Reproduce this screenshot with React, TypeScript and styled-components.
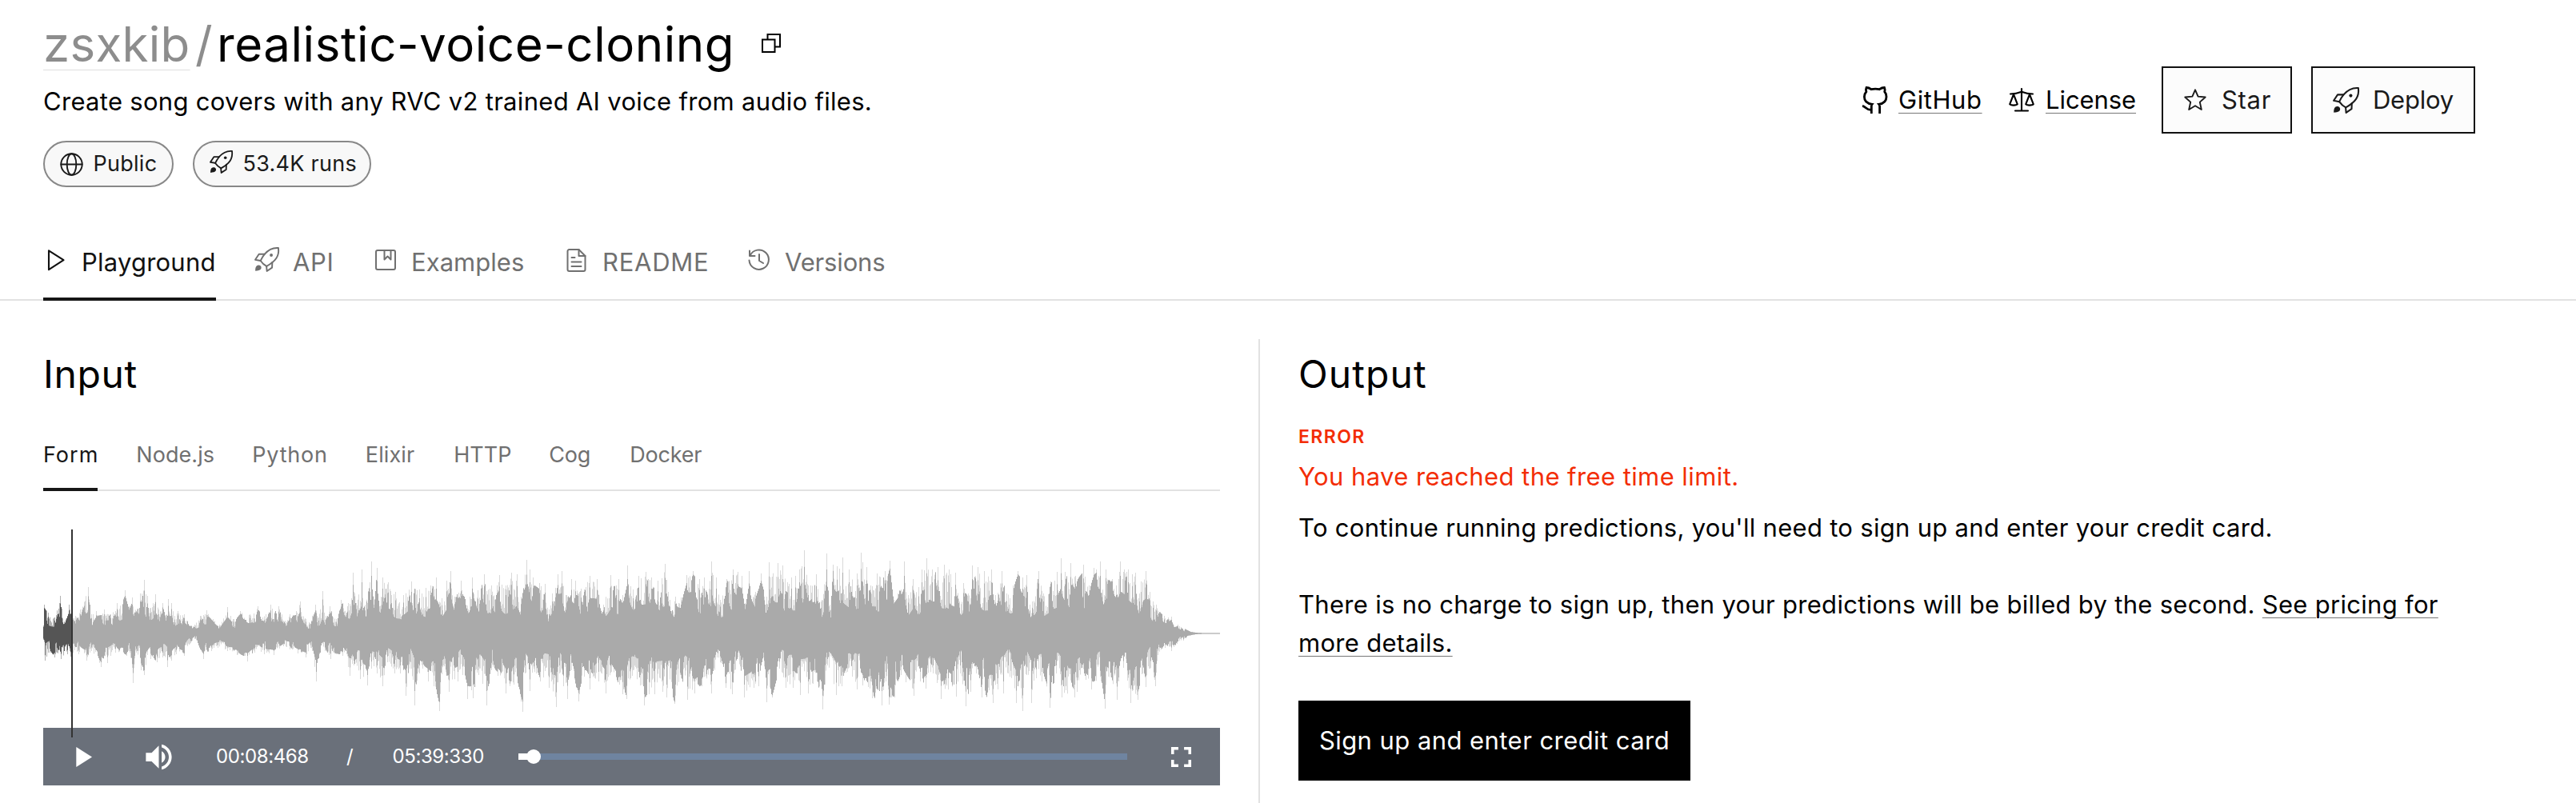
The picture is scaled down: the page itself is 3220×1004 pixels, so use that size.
import React from "react";
import styled, { createGlobalStyle } from "styled-components";

const GlobalStyle = createGlobalStyle`
  * { box-sizing: border-box; }
  body {
    margin: 0;
    background: #fff;
    color: #000;
    font-family: "Inter", "Liberation Sans", sans-serif;
    font-size: 31px;
    line-height: 48px;
    letter-spacing: 0.3px;
  }
`;

const Page = styled.div`
  width: 3220px;
  height: 1004px;
  overflow: hidden;
  display: flex;
  flex-direction: column;
`;

/* ---------- header ---------- */

const Header = styled.header`
  flex: none;
  display: flex;
  justify-content: space-between;
  padding: 19px 126px 0 54px;
  height: 304px;
`;

const TitleRow = styled.h1`
  margin: 0;
  display: flex;
  align-items: center;
  height: 72px;
  font-size: 60px;
  font-weight: 400;
  line-height: 72px;
`;

const Owner = styled.a`
  width: 183px;
  color: #8d8d8d;
  letter-spacing: 0.3px;
  white-space: nowrap;
  text-decoration: underline 1px #dedede;
  text-underline-offset: 10px;
  text-decoration-skip-ink: none;
`;

const Slash = styled.span`
  width: 34px;
  padding-left: 7px;
  color: #8d8d8d;
`;

const ModelName = styled.span`
  letter-spacing: 0.55px;
  margin-right: 33px;
`;

const Description = styled.p`
  margin: 12px 0 25px;
`;

const Pills = styled.div`
  display: flex;
  gap: 24px;
`;

const Pill = styled.span<{ $width: number }>`
  display: flex;
  align-items: center;
  width: ${(p) => p.$width}px;
  height: 58px;
  padding-left: 19px;
  border: 2px solid #888;
  border-radius: 29px;
  background: #f8f8f8;
  color: #1a1a1a;
  font-size: 27px;
  letter-spacing: 0.27px;
  white-space: nowrap;
`;

const PillLabel = styled.span`
  margin-left: 12.5px;
`;

const Actions = styled.div`
  display: flex;
  align-items: center;
  height: 84px;
  margin-top: 64px;
`;

const ActionLink = styled.a<{ $gap: number; $spacing: number; $width: number }>`
  display: flex;
  align-items: center;
  width: ${(p) => p.$width}px;
  gap: ${(p) => p.$gap}px;
  letter-spacing: ${(p) => p.$spacing}px;
`;

const Underlined = styled.span`
  text-decoration: underline 1px #777;
  text-underline-offset: 5px;
`;

const ActionButton = styled.button<{ $width: number; $gap: number; $spacing: number; $left: number }>`
  display: flex;
  align-items: center;
  gap: ${(p) => p.$gap}px;
  width: ${(p) => p.$width}px;
  height: 84px;
  margin: 0 0 0 24px;
  padding: 0 0 0 ${(p) => p.$left}px;
  border: 2px solid #111;
  background: #fcfcfc;
  color: #1a1a1a;
  font: inherit;
  letter-spacing: ${(p) => p.$spacing}px;
`;

/* ---------- tabs ---------- */

const MainTabs = styled.nav`
  flex: none;
  display: flex;
  gap: 48px;
  height: 72px;
  padding-left: 54px;
  box-shadow: inset 0 -2px #e2e2e2;
`;

const MainTab = styled.a<{ $active?: boolean; $width: number; $spacing: number }>`
  display: flex;
  gap: 16px;
  width: ${(p) => p.$width}px;
  height: 72px;
  color: ${(p) => (p.$active ? "#111" : "#707070")};
  letter-spacing: ${(p) => p.$spacing}px;
  white-space: nowrap;
  border-bottom: ${(p) => (p.$active ? "4px solid #161616" : "none")};
`;

const TabIcon = styled.span`
  display: flex;
  flex: none;
  width: 32px;
  height: 32px;
  margin-top: 5px;
`;

const SubTabs = styled.nav`
  display: flex;
  gap: 48px;
  height: 65px;
  margin-top: 51px;
  box-shadow: inset 0 -2px #e2e2e2;
  font-size: 27px;
  line-height: 40px;
`;

const SubTab = styled.a<{ $active?: boolean; $width: number; $spacing: number }>`
  width: ${(p) => p.$width}px;
  height: 65px;
  color: ${(p) => (p.$active ? "#161616" : "#707070")};
  letter-spacing: ${(p) => p.$spacing}px;
  white-space: nowrap;
  border-bottom: ${(p) => (p.$active ? "4px solid #161616" : "none")};
`;

/* ---------- columns ---------- */

const Columns = styled.main`
  flex: none;
  display: flex;
  padding: 48px 126px 0 54px;
  height: 628px;
`;

const InputColumn = styled.section`
  width: 1519px;
  padding: 14px 48px 0 0;
`;

const OutputColumn = styled.section`
  flex: 1;
  padding: 14px 0 0 48px;
  border-left: 2px solid #e2e2e2;
`;

const Heading = styled.h2<{ $spacing: number }>`
  margin: 0;
  font-size: 48px;
  font-weight: 400;
  line-height: 60px;
  letter-spacing: ${(p) => p.$spacing}px;
`;

const ErrorLabel = styled.p`
  margin: 32px 0 0;
  color: #f32d05;
  font-size: 23px;
  font-weight: 600;
  line-height: 32px;
  letter-spacing: 1.4px;
`;

const ErrorMessage = styled.p`
  margin: 10px 0 16px;
  color: #f32d05;
  letter-spacing: 0.42px;
`;

const Paragraph = styled.p`
  margin: 0 0 48px;
  max-width: 1440px;
`;

const SignUp = styled.button`
  display: block;
  width: 490px;
  height: 100px;
  padding: 0;
  border: 0;
  background: #000;
  color: #fff;
  font: inherit;
  letter-spacing: 0.44px;
`;

/* ---------- player ---------- */

const Player = styled.div`
  position: relative;
  width: 1471px;
  margin-top: 48px;
`;

const Wave = styled.svg`
  display: block;
  width: 1471px;
  height: 248px;
`;

const Cursor = styled.i`
  position: absolute;
  top: 0;
  left: 35px;
  width: 2px;
  height: 260px;
  background: #333;
`;

const Controls = styled.div`
  display: flex;
  align-items: center;
  height: 72px;
  padding: 0 27px;
  background: #6a707a;
  color: #fff;
  font-size: 24px;
`;

const Glyph = styled.svg<{ $left?: number }>`
  flex: none;
  width: 43px;
  height: 43px;
  margin-left: ${(p) => p.$left ?? 0}px;
  fill: currentColor;
`;

const Time = styled.span<{ $width: number; $left?: number }>`
  flex: none;
  width: ${(p) => p.$width}px;
  margin-left: ${(p) => p.$left ?? 0}px;
  letter-spacing: -0.4px;
  white-space: nowrap;
`;

const Track = styled.div`
  flex: none;
  display: flex;
  align-items: center;
  width: 761px;
  height: 8px;
  margin-right: 46px;
  background: #6f84a0;
`;

const Progress = styled.i`
  width: 12px;
  height: 8px;
  background: #fff;
`;

const Thumb = styled.i`
  width: 18px;
  height: 18px;
  margin-left: -2px;
  border-radius: 50%;
  background: #fff;
`;

/* ---------- icons ---------- */

const Line = styled.svg<{ $shift?: number }>`
  flex: none;
  display: block;
  margin-top: ${(p) => p.$shift ?? 0}px;
  overflow: visible;
  fill: none;
  stroke: currentColor;
  stroke-linecap: round;
  stroke-linejoin: round;
`;

const SharpLine = styled(Line)`
  stroke-linecap: butt;
  stroke-linejoin: miter;
`;

const Rocket = ({ size, shift = 0 }: { size: number; shift?: number }) => (
  <Line $shift={shift} width={size} height={size} viewBox="0 0 24 24" strokeWidth={1.5}>
    <path d="M23.2.8C16.4.2 12.6 3.6 9.8 6.8 8.2 8.8 6.8 11.2 5.9 13.2c1.6 2.3 3.4 4 5.9 5.3C20.8 13.4 24.2 8.6 23.2.8Z" />
    <path d="M9.9 6.8H4.4L.8 12.2l5.1 1M17.3 14.6l-.2 5.2-5 3.4-.4-4.7" />
    <path d="M.9 23.1C.8 19.6 1.8 17.6 4 17.5c2 0 3.2 1.7 2.5 3.4C5.7 22.6 3.4 22.7.9 23.1Z" fill="currentColor" stroke="none" />
    <circle cx="16.3" cy="7.7" r="1.5" fill="currentColor" stroke="none" />
  </Line>
);

const Copy = () => (
  <SharpLine $shift={-3} width={26} height={26} viewBox="0 0 26 26" strokeWidth={2}>
    <path d="M2 8.5h15.500v15.500H2Z" />
    <path d="M8.500 8.500V2H24v15.500h-6.500" />
  </SharpLine>
);

const Globe = () => (
  <Line width={29} height={29} viewBox="0 0 29 29" strokeWidth={1.9}>
    <circle cx="14.5" cy="14.5" r="13.2" />
    <ellipse cx="14.5" cy="14.5" rx="5.8" ry="13.2" />
    <path d="M1.3 14.5h26.4" />
  </Line>
);

const GitHub = () => (
  <SharpLine width={32} height={35} viewBox="0 0 32 35" strokeWidth={2.8}>
    <path d="M12.3 34v-9.500c0-1 .3-1.600.8-2.200C7.500 21.600 3.400 18.500 3.400 13c0-2.600.9-4.700 2.400-6.300C5.300 5 5.300 3 6 1.500c2.300 0 4.200.9 6 2.200 3-.7 7.400-.7 10.300 0 1.800-1.300 3.900-2.200 6.200-2.200.7 1.500.8 3.500.3 5.200C30.300 8.300 31 10.400 31 13c0 5.500-3.800 8.600-9.400 9.300.6.7 1 1.600 1 2.700v9" />
    <path d="M12.300 29.300C5.500 29.800 5.800 25.500 1 24.300" />
  </SharpLine>
);

const Scales = () => (
  <Line width={32} height={30} viewBox="0 0 32 30" strokeWidth={2.1}>
    <path d="M16 1v27.500M8 28.500h16M2 7.500c5-.1 9-.9 14-2.800 5 1.900 9 2.700 14 2.800" />
    <path d="M6 8 1.200 20.300C2.300 22 9.700 22 10.800 20.300L6 8ZM26 8l-4.800 12.300c1.100 1.700 8.500 1.700 9.600 0L26 8Z" />
  </Line>
);

const Star = () => (
  <Line width={28} height={28} viewBox="0 0 28 28" strokeWidth={1.9}>
    <path d="M14 1.300 17.600 9.600l9.100.9-6.900 6.100 2 9.400L14 21.200 6.200 26l2-9.400-6.900-6.100 9.100-.9Z" />
  </Line>
);

const PlayOutline = () => (
  <Line width={32} height={32} viewBox="0 0 32 32" strokeWidth={2.1}>
    <path d="M7 4.300 25.500 16.200 7 28.200Z" />
  </Line>
);

const Bookmark = () => (
  <Line width={32} height={32} viewBox="0 0 32 32" strokeWidth={2}>
    <rect x="4" y="4" width="24" height="24" rx="2" />
    <path d="M14.500 4v11.500l4-4 4 4V4" />
  </Line>
);

const Document = () => (
  <Line width={32} height={32} viewBox="0 0 32 32" strokeWidth={2}>
    <path d="M18.500 3H6.500a2 2 0 0 0-2 2v23a2 2 0 0 0 2 2h18a2 2 0 0 0 2-2V11Z" />
    <path d="M18.500 3v8h8M9.500 13h4M9.500 18.500h12M9.500 24h12" />
  </Line>
);

const History = () => (
  <Line width={32} height={32} viewBox="0 0 32 32" strokeWidth={2}>
    <path d="M4 4.500V11h6.500M4.600 10.500A12.200 12.200 0 1 1 3.500 16.500M16 9v8l5 3" />
  </Line>
);

/* ---------- waveform ---------- */

// alternating x and peak height above the axis
const upper: number[] = [
  0, 10, 1, 36, 6, 26, 14, 20, 21, 47, 26, 15, 32, 36, 36, 22, 46, 30, 56, 58, 60, 24, 66, 28, 76, 30, 84, 24, 92, 38,
  102, 54, 107, 34, 111, 45, 117, 30, 121, 50, 126, 67, 130, 47, 134, 32, 140, 49, 144, 30, 149, 38, 153, 20, 156, 43,
  160, 38, 164, 22, 168, 28, 176, 24, 187, 9, 196, 22, 204, 29, 212, 18, 220, 11, 230, 33, 238, 18, 246, 28, 258, 24,
  268, 34, 274, 20, 284, 36, 294, 34, 302, 16, 308, 24, 321, 40, 328, 18, 332, 14, 340, 36, 344, 20, 349, 53, 353, 22,
  358, 34, 366, 18, 372, 42, 380, 34, 387, 76, 391, 38, 398, 80, 402, 36, 410, 90, 413, 36, 417, 82, 420, 34, 424, 70,
  431, 64, 440, 52, 450, 48, 460, 65, 470, 55, 478, 57, 484, 60, 491, 70, 498, 44, 504, 66, 509, 78, 514, 46, 522, 66,
  530, 35, 536, 70, 543, 54, 551, 74, 560, 60, 570, 73, 578, 60, 585, 76, 592, 74, 597, 46, 604, 92, 608, 80, 612, 70,
  620, 63, 627, 62, 632, 30, 636, 50, 643, 74, 648, 78, 654, 48, 660, 68, 665, 66, 672, 56, 683, 72, 692, 68, 700, 36,
  709, 73, 716, 60, 719, 68, 724, 48, 730, 85, 737, 55, 744, 72, 753, 77, 760, 70, 768, 66, 777, 87, 783, 42, 790, 46,
  797, 45, 804, 73, 812, 78, 820, 68, 826, 70, 830, 50, 835, 90, 841, 70, 846, 42, 854, 68, 862, 80, 868, 77, 873, 72,
  877, 38, 882, 78, 890, 52, 897, 75, 904, 46, 907, 89, 918, 88, 924, 85, 930, 64, 935, 70, 940, 72, 945, 80, 951, 104,
  956, 60, 966, 74, 972, 40, 979, 100, 983, 36, 987, 86, 992, 84, 999, 95, 1007, 80, 1017, 75, 1022, 101, 1029, 83,
  1034, 60, 1042, 75, 1052, 78, 1058, 91, 1063, 42, 1068, 50, 1076, 90, 1081, 48, 1087, 68, 1094, 58, 1098, 80,
  1104, 94, 1111, 80, 1118, 83, 1126, 86, 1132, 80, 1140, 76, 1145, 40, 1150, 63, 1156, 50, 1161, 85, 1168, 83, 1176, 78,
  1185, 80, 1190, 48, 1198, 78, 1204, 50, 1212, 60, 1218, 78, 1224, 70, 1229, 73, 1233, 36, 1236, 40, 1244, 78, 1250, 50,
  1259, 65, 1267, 77, 1272, 94, 1277, 77, 1284, 88, 1290, 72, 1300, 86, 1307, 60, 1313, 82, 1321, 90, 1326, 48, 1328, 80,
  1336, 68, 1341, 60, 1346, 90, 1356, 80, 1361, 74, 1365, 76, 1370, 50, 1372, 65, 1378, 78, 1383, 52, 1387, 40, 1391, 36,
  1396, 27, 1401, 22, 1406, 20, 1410, 21, 1413, 10, 1418, 11, 1422, 8, 1428, 5, 1434, 2, 1440, 1, 1450, 0.5, 1471, 0.5,
];

// alternating x and peak depth below the axis
const lower: number[] = [
  0, 8, 2, 34, 8, 24, 14, 30, 22, 32, 30, 26, 34, 29, 44, 26, 54, 34, 60, 22, 72, 42, 80, 37, 90, 24, 104, 28, 108, 24,
  112, 62, 116, 24, 122, 46, 126, 52, 134, 32, 142, 36, 149, 30, 155, 42, 160, 34, 166, 26, 176, 28, 184, 12, 190, 7,
  200, 32, 210, 22, 218, 18, 230, 22, 242, 27, 255, 35, 264, 24, 276, 26, 288, 27, 300, 16, 308, 20, 318, 25, 328, 30,
  334, 18, 341, 60, 345, 26, 352, 22, 359, 32, 366, 26, 374, 28, 383, 53, 388, 40, 396, 57, 405, 65, 410, 44, 417, 50,
  424, 66, 430, 36, 439, 50, 446, 50, 453, 78, 458, 44, 464, 90, 470, 50, 481, 60, 488, 66, 495, 97, 500, 40, 507, 73,
  518, 60, 524, 52, 530, 82, 537, 81, 544, 52, 554, 90, 560, 46, 568, 53, 578, 75, 588, 64, 599, 98, 602, 50, 608, 72,
  616, 50, 621, 60, 632, 68, 641, 92, 645, 50, 650, 66, 655, 82, 660, 46, 669, 85, 676, 54, 683, 70, 694, 60, 703, 75,
  710, 48, 724, 76, 729, 82, 734, 56, 746, 65, 751, 90, 757, 76, 764, 76, 774, 73, 779, 80, 789, 88, 797, 56, 805, 83,
  814, 75, 823, 66, 835, 75, 842, 30, 846, 36, 853, 68, 861, 76, 868, 30, 876, 80, 888, 68, 894, 66, 900, 30, 904, 86,
  911, 80, 920, 44, 928, 68, 937, 68, 946, 77, 956, 75, 967, 60, 974, 95, 980, 40, 991, 77, 998, 66, 1005, 48, 1017, 70,
  1024, 65, 1036, 81, 1048, 90, 1053, 60, 1057, 89, 1064, 80, 1072, 52, 1078, 61, 1088, 78, 1096, 60, 1103, 69, 1112, 50,
  1122, 82, 1131, 70, 1141, 79, 1146, 50, 1153, 91, 1159, 73, 1166, 50, 1173, 80, 1187, 87, 1193, 70, 1200, 75, 1206, 50,
  1216, 87, 1224, 97, 1229, 52, 1235, 87, 1241, 56, 1248, 60, 1258, 93, 1266, 50, 1273, 80, 1289, 80, 1292, 73, 1303, 58,
  1310, 70, 1322, 60, 1327, 94, 1331, 54, 1342, 83, 1350, 43, 1359, 87, 1368, 83, 1374, 50, 1378, 67, 1384, 43, 1390, 66,
  1393, 27, 1402, 18, 1410, 22, 1417, 13, 1425, 9, 1430, 3, 1440, 1, 1450, 0.5, 1471, 0.5,
];

const SPAN = 1471;
const AXIS = 130;

function random(seed: number) {
  let s = seed;
  return () => {
    s = (s * 1664525 + 1013904223) % 4294967296;
    return s / 4294967296;
  };
}

function buildSide(points: number[], direction: number, seed: number) {
  const next = random(seed);
  const solid: string[] = [];
  const light: string[] = [];
  let k = 0;
  let body = 0.6;
  let goal = 0.6;
  for (let x = 0; x < SPAN; x++) {
    while (k < points.length - 4 && points[k + 2] <= x) k += 2;
    const t = Math.min(1, Math.max(0, (x - points[k]) / (points[k + 2] - points[k])));
    const envelope = points[k + 1] * (1 - t) + points[k + 3] * t;
    const peak = Math.abs(x - points[k]) < 1 || Math.abs(x - points[k + 2]) < 1;
    if (next() < 0.4) goal = 0.36 + Math.pow(next(), 1.3) * 0.62;
    body += (goal - body) * 0.7;
    const calm = envelope < 6 ? 1 : body;
    const inner = Math.max(0.4, envelope * (peak ? Math.max(0.8, calm) : calm));
    const outer = peak ? envelope : Math.max(inner, envelope * (0.4 + next() * 0.55));
    solid.push(`L${x} ${(AXIS + direction * inner).toFixed(1)}L${x + 1} ${(AXIS + direction * inner).toFixed(1)}`);
    light.push(`L${x} ${(AXIS + direction * outer).toFixed(1)}L${x + 1} ${(AXIS + direction * outer).toFixed(1)}`);
  }
  const close = (parts: string[]) => `M0 ${AXIS}${parts.join("")}L${SPAN} ${AXIS}Z`;
  return { solid: close(solid), light: close(light) };
}

const above = buildSide(upper, -1, 7);
const below = buildSide(lower, 1, 42);

const Samples = ({ color }: { color: string }) => (
  <g fill={color}>
    <path d={above.light} opacity={0.45} />
    <path d={below.light} opacity={0.45} />
    <path d={above.solid} />
    <path d={below.solid} />
  </g>
);

const Waveform = () => (
  <Wave viewBox="0 0 1471 248">
    <defs>
      <clipPath id="played"><rect width="36" height="248" /></clipPath>
      <clipPath id="remaining"><rect x="36" width="1435" height="248" /></clipPath>
    </defs>
    <g clipPath="url(#played)"><Samples color="#555" /></g>
    <g clipPath="url(#remaining)"><Samples color="#aaa" /></g>
  </Wave>
);

const mainTabs = [
  { label: "Playground", icon: <PlayOutline />, width: 216, spacing: 0.22, active: true },
  { label: "API", icon: <Rocket size={31} />, width: 100, spacing: 0.6 },
  { label: "Examples", icon: <Bookmark />, width: 191, spacing: 0.04 },
  { label: "README", icon: <Document />, width: 180, spacing: 0.75 },
  { label: "Versions", icon: <History />, width: 176, spacing: -0.15 },
];

const subTabs = [
  { label: "Form", width: 68.3, spacing: 1, active: true },
  { label: "Node.js", width: 97, spacing: 0.06 },
  { label: "Python", width: 93.5, spacing: 0.8 },
  { label: "Elixir", width: 62.5, spacing: 0.1 },
  { label: "HTTP", width: 71, spacing: 0 },
  { label: "Cog", width: 53, spacing: -0.2 },
  { label: "Docker", width: 90, spacing: -0.2 },
];

export default function App() {
  return (
    <Page>
      <GlobalStyle />
      <Header>
        <div>
          <TitleRow>
            <Owner>zsxkib</Owner>
            <Slash>/</Slash>
            <ModelName>realistic-voice-cloning</ModelName>
            <Copy />
          </TitleRow>
          <Description>Create song covers with any RVC v2 trained AI voice from audio files.</Description>
          <Pills>
            <Pill $width={163}><Globe /><PillLabel>Public</PillLabel></Pill>
            <Pill $width={223}><Rocket size={29} shift={-6} /><PillLabel>53.4K runs</PillLabel></Pill>
          </Pills>
        </div>
        <Actions>
          <ActionLink $gap={14} $spacing={0.57} $width={184}><GitHub /><Underlined>GitHub</Underlined></ActionLink>
          <ActionLink $gap={14} $spacing={-0.08} $width={167}><Scales /><Underlined>License</Underlined></ActionLink>
          <ActionButton $width={163} $left={26} $gap={19} $spacing={0.7}><Star />Star</ActionButton>
          <ActionButton $width={205} $left={25} $gap={17} $spacing={-0.25}><Rocket size={33} />Deploy</ActionButton>
        </Actions>
      </Header>

      <MainTabs>
        {mainTabs.map((t) => (
          <MainTab key={t.label} $active={t.active} $width={t.width} $spacing={t.spacing}>
            <TabIcon>{t.icon}</TabIcon>
            {t.label}
          </MainTab>
        ))}
      </MainTabs>

      <Columns>
        <InputColumn>
          <Heading $spacing={0.6}>Input</Heading>
          <SubTabs>
            {subTabs.map((t) => (
              <SubTab key={t.label} $active={t.active} $width={t.width} $spacing={t.spacing}>{t.label}</SubTab>
            ))}
          </SubTabs>
          <Player>
            <Waveform />
            <Controls>
              <Glyph viewBox="0 0 24 24"><path d="M8 5v14l11-7z" /></Glyph>
              <Glyph viewBox="0 0 24 24" $left={53}>
                <path d="M3 9v6h4l5 5V4L7 9H3zm13.500 3c0-1.770-1.020-3.290-2.500-4.030v8.050c1.480-.730 2.500-2.250 2.500-4.020zM14 3.230v2.060c2.890.860 5 3.540 5 6.710s-2.110 5.850-5 6.710v2.060c4.010-.910 7-4.490 7-8.770s-2.990-7.860-7-8.770z" />
              </Glyph>
              <Time $left={50} $width={163}>00:08:468</Time>
              <Time $width={57.5}>/</Time>
              <Time $width={157.5}>05:39:330</Time>
              <Track><Progress /><Thumb /></Track>
              <Glyph viewBox="0 0 24 24"><path d="M7 14H5v5h5v-2H7v-3zm-2-4h2V7h3V5H5v5zm12 7h-3v2h5v-5h-2v3zM14 5v2h3v3h2V5h-5z" /></Glyph>
            </Controls>
            <Cursor />
          </Player>
        </InputColumn>

        <OutputColumn>
          <Heading $spacing={1.1}>Output</Heading>
          <ErrorLabel>ERROR</ErrorLabel>
          <ErrorMessage>You have reached the free time limit.</ErrorMessage>
          <Paragraph>To continue running predictions, you'll need to sign up and enter your credit card.</Paragraph>
          <Paragraph>
            There is no charge to sign up, then your predictions will be billed by the second.{" "}
            <Underlined>See pricing for more details.</Underlined>
          </Paragraph>
          <SignUp>Sign up and enter credit card</SignUp>
        </OutputColumn>
      </Columns>
    </Page>
  );
}
